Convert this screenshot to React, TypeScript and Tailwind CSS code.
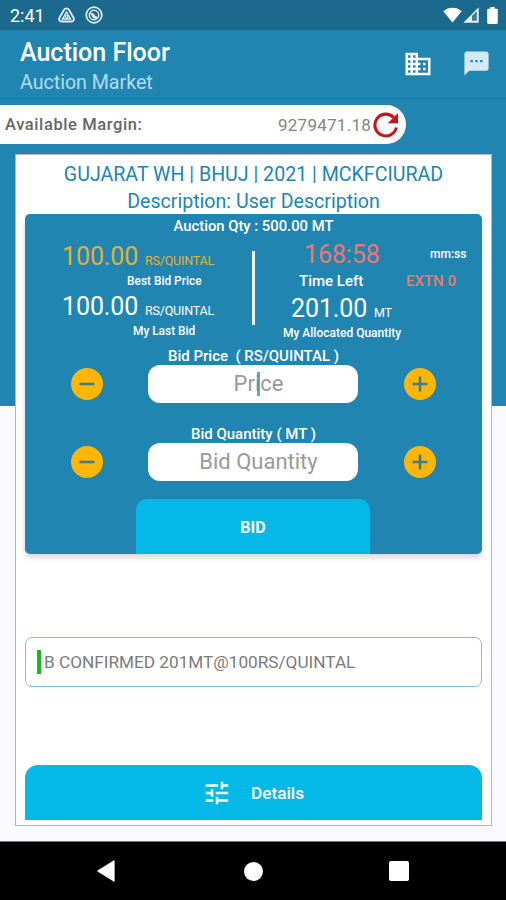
import React from "react";
import { MdBusiness, MdTextsms, MdTune } from "react-icons/md";

interface IStepper {
    label: string,
    placeholder: string,
    focused?: boolean,
}

interface INotification {
    id: number,
    message: string,
}

const fields: IStepper[] = [
    {
        label: "Bid Price\u00a0 ( RS/QUINTAL )",
        placeholder: "Price",
        focused: true
    },
    {
        label: "Bid Quantity ( MT )",
        placeholder: "Bid Quantity"
    }
];

const notifications: INotification[] = [
    {
        id: 1,
        message: "B CONFIRMED 201MT@100RS/QUINTAL"
    }
];

const StatusBar: React.FC = () => (
    <div className="flex h-[30px] items-center bg-[#1b6a8e] pl-[10px] pr-[8px] text-white">
        <span className="w-[48px] pt-[2px] text-[18px] leading-[32px]">2:41</span>
        <svg className="mr-[10px] h-[16px] w-[17px]" viewBox="0 0 17 16" fill="none" stroke="#e3eef3">
            <path d="M8.5 1.3c1.2 0 2 .6 2.6 1.7l4.3 7.5c1.2 2.2.2 4-2.2 4H3.8c-2.4 0-3.4-1.8-2.2-4L5.9 3c.6-1.1 1.4-1.7 2.6-1.7z" strokeWidth="1.8" />
            <path d="M8.5 5.2l4 6.8h-8z" strokeWidth="1.4" />
            <circle cx="8.5" cy="9.7" r="1.2" strokeWidth="1.2" />
        </svg>
        <svg className="h-[18px] w-[18px]" viewBox="0 0 18 18" fill="none" stroke="#e3eef3">
            <circle cx="9" cy="9" r="7.8" strokeWidth="1.7" />
            <circle cx="9" cy="9" r="4.7" strokeWidth="1.4" />
            <path d="M4.8 7c2.6-.8 4.2.2 5 2.2.4 1 1.6 1.6 3.2 1.4l-1.6 2.2C9 13 7 11.400 6.400 9z" fill="#e3eef3" stroke="none" />
        </svg>
        <svg className="ml-auto h-[16px] w-[19px]" viewBox="0 0 19 16" fill="#fff">
            <path d="M9.5 15.5L.3 4.2C5.6-.4 13.4-.4 18.7 4.2z" />
        </svg>
        <svg className="ml-[1px] h-[16px] w-[16px]" viewBox="0 0 16 16">
            <path d="M.3 15.7L15.7.3v15.4z" fill="#e9f2f6" />
            <path d="M9 8.8l4.8-4.6v9.6H9z" fill="#1b6a8e" opacity=".85" />
        </svg>
        <svg className="ml-[8px] h-[17px] w-[11px]" viewBox="0 0 11 17" fill="#fff">
            <path d="M3.3 0h4.4v1.8H9.6c.8 0 1.2.5 1.2 1.2v12.8c0 .7-.4 1.2-1.2 1.2H1.4C.6 17 .2 16.5.2 15.8V3c0-.7.4-1.2 1.2-1.2h1.9z" />
        </svg>
    </div>
);

const Header: React.FC = () => (
    <header className="flex h-[68px] bg-[#2185b2] pl-[20px]">
        <div className="flex-1 pt-[8px] whitespace-nowrap">
            <h1 className="text-[25px] leading-[30px] font-medium text-white">Auction Floor</h1>
            <h2 className="text-[19.6px] leading-[30px] text-[#b5dbee]">Auction Market</h2>
        </div>
        <MdBusiness className="mt-[19px] mr-[29px] size-[30px] text-white" />
        <MdTextsms className="mt-[19px] mr-[15px] size-[29px] text-[#d3e9f3]" />
    </header>
);

const Margin: React.FC = () => (
    <div className="flex h-[39px] w-[406px] items-center rounded-r-[20px] bg-white pl-[5px] pr-[6px] whitespace-nowrap">
        <span className="pt-[2px] text-[16.5px] font-medium tracking-[0.6px] text-[#666]">Available Margin:</span>
        <span className="ml-auto pt-[2px] text-[17px] tracking-[0.25px] text-[#858585]">9279471.18</span>
        <svg className="ml-[2px] mr-px h-[26px] w-[26px]" viewBox="0 0 26 26" fill="none">
            <path d="M23.4 15.5A10.9 10.9 0 1 1 20.6 5.4" stroke="#c4161c" strokeWidth="3.1" />
            <path d="M25 1v10.3H14.6l3.6-3.6 3.2-3.2z" fill="#c4161c" />
        </svg>
    </div>
);

const Stats: React.FC = () => (
    <div className="flex h-[107px] text-white whitespace-nowrap">
        <div className="w-[227px] pl-[37px]">
            <div className="flex h-[34px] items-baseline text-[#e0b03c]">
                <span className="w-[83px] text-[25px] leading-[38px] tracking-[-0.1px]">100.00</span>
                <span className="text-[12.5px] tracking-[-0.2px]">RS/QUINTAL</span>
            </div>
            <div className="h-[16px] pl-[65px] text-[11.9px] leading-[18px] font-medium">Best Bid Price</div>
            <div className="flex h-[34px] items-baseline">
                <span className="w-[83px] text-[25px] leading-[37px] tracking-[-0.1px]">100.00</span>
                <span className="text-[12.5px] tracking-[-0.2px]">RS/QUINTAL</span>
            </div>
            <div className="h-[16px] pl-[71px] text-[11.9px] leading-[18px] font-medium">My Last Bid</div>
        </div>
        <div className="mt-[13px] h-[74px] w-[3px] bg-[#eaf4f8]" />
        <div className="flex-1">
            <div className="flex h-[34px] pl-[49px]">
                <span className="w-[126px] text-[25px] leading-[34px] tracking-[-0.1px] text-[#ea7a6c]">168:58</span>
                <span className="text-[12px] leading-[33px] font-medium">mm:ss</span>
            </div>
            <div className="flex h-[17px] pl-[44px] leading-[19px] font-medium">
                <span className="w-[107px] text-[15px]">Time Left</span>
                <span className="text-[15px] text-[#ea7a6c]">EXTN 0</span>
            </div>
            <div className="flex h-[35px] items-baseline pl-[36px]">
                <span className="w-[83px] text-[25px] leading-[39px] tracking-[-0.1px]">201.00</span>
                <span className="text-[12.5px] tracking-[-0.2px]">MT</span>
            </div>
            <div className="h-[16px] pl-[28px] text-[12px] leading-[18px] font-medium">My Allocated Quantity</div>
        </div>
    </div>
);

const RoundButton: React.FC<{ plus?: boolean, name: string }> = ({ plus, name }) => (
    <button aria-label={name} className="flex size-[32px] items-center justify-center rounded-full bg-[#ffb606]">
        <svg className="size-[16px]" viewBox="0 0 16 16" stroke="#3f7d8c" strokeWidth="2.6">
            <path d={plus ? "M.5 8h15M8 .5v15" : "M.5 8h15"} />
        </svg>
    </button>
);

const Stepper: React.FC<IStepper> = ({ label, placeholder, focused }) => (
    <div className="h-[78px]">
        <div className="h-[16px] text-center text-[15px] leading-[15px] font-medium text-white whitespace-nowrap">{label}</div>
        <div className="flex h-[38px] items-center justify-between px-[46px]">
            <RoundButton name={`Decrease ${placeholder}`} />
            <div className="relative mr-px flex h-[38px] w-[210px] items-center justify-center rounded-[12px] bg-white">
                <span className="pl-[11px] text-[22px] leading-[36px] text-[#9a9a9a]">{placeholder}</span>
                {focused && <span className="absolute top-[7px] left-[109px] h-[24px] w-[3px] bg-[#2f9ac9]/80" />}
            </div>
            <RoundButton plus name={`Increase ${placeholder}`} />
        </div>
    </div>
);

const BidPanel: React.FC = () => (
    <section className="flex h-[340px] flex-col rounded-[5px] bg-[#2185b2] shadow-[0_4px_5px_rgba(0,0,0,0.15)]">
        <div className="h-[24px] text-center text-[14.8px] leading-[25px] font-medium text-white">Auction Qty : 500.00 MT</div>
        <Stats />
        <div className="h-[154px] pt-[4px]">
            {
                fields.map((field: IStepper) => (
                    <Stepper key={field.placeholder} {...field} />
                ))
            }
        </div>
        <button className="mt-auto ml-[111px] h-[55px] w-[234px] shrink-0 rounded-t-[11px] bg-[#04b8e8] pt-[2px] text-[16px] font-bold text-white">
            BID
        </button>
    </section>
);

const NavBar: React.FC = () => (
    <nav className="flex h-[59px] items-center border-t border-[#777] bg-black pl-[97px]">
        <svg className="h-[22px] w-[18px]" viewBox="0 0 18 22" fill="#fff">
            <path d="M17.2.6v20.8L.4 11z" stroke="#fff" strokeWidth=".8" strokeLinejoin="round" />
        </svg>
        <div className="ml-[129px] size-[19px] rounded-full bg-white" />
        <div className="ml-[126px] size-[20px] rounded-[2px] bg-white" />
    </nav>
);

const App: React.FC = () => {

    return (
        <div className="flex h-[900px] w-[506px] flex-col overflow-hidden bg-[#f9f9fe] font-['Roboto',sans-serif]">
            <StatusBar />
            <Header />
            <main className="flex-1 border-t border-[#1c7ba8] bg-[linear-gradient(#2185b2_307px,#f9f9fe_307px)] pt-[6px]">
                <Margin />
                <div className="mt-[10px] ml-[15px] flex h-[672px] w-[477px] flex-col border border-[#b5b5ba] bg-white px-[9px]">
                    <div className="h-[59px] pt-[7px] text-center text-[19.6px] leading-[26.500px] text-[#2185b2] whitespace-nowrap">
                        <div>GUJARAT WH | BHUJ | 2021 | MCKFCIURAD</div>
                        <div>Description: User Description</div>
                    </div>
                    <BidPanel />
                    {
                        notifications.map((item: INotification) => (
                            <div key={item.id} className="mt-[83px] flex h-[50px] items-center rounded-[7px] border border-[#7cc0de] pl-[11px]">
                                <span className="h-[24px] w-[4px] bg-[#1db522]" />
                                <span className="ml-[3px] pt-[2px] text-[17.2px] text-[#7b7b7b] whitespace-nowrap">{item.message}</span>
                            </div>
                        ))
                    }
                    <button className="mt-auto mb-[5px] flex h-[55px] items-center rounded-t-[13px] bg-[#04b8e8] pl-[177px] text-[17.2px] font-medium text-white">
                        <MdTune className="mr-[19px] size-[30px]" />
                        <span className="pt-[2px]">Details</span>
                    </button>
                </div>
            </main>
            <NavBar />
        </div>
    )
}

export default App
